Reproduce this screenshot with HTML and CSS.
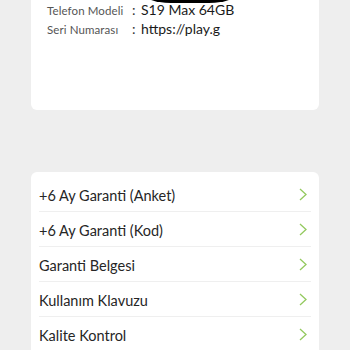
FILE: index.html
```html
<!DOCTYPE html>
<html>
<head>
<meta charset="utf-8">
<link rel="stylesheet" href="styles.css">
</head>
<body>
<div class="page">
  <div class="card info">
    <div class="blob"></div>
    <div class="inforow first">
      <span class="label">Telefon Modeli</span>
      <span class="colon">:</span>
      <span class="value">S19 Max 64GB</span>
    </div>
    <div class="inforow">
      <span class="label">Seri Numarası</span>
      <span class="colon">:</span>
      <span class="value">https://play.g</span>
    </div>
  </div>
  <div class="card menu">
    <div class="item"><span>+6 Ay Garanti (Anket)</span><svg class="chev" viewBox="0 0 8 13"><path d="M1 1 L7 6.5 L1 12" /></svg></div>
    <div class="item"><span>+6 Ay Garanti (Kod)</span><svg class="chev" viewBox="0 0 8 13"><path d="M1 1 L7 6.5 L1 12" /></svg></div>
    <div class="item"><span>Garanti Belgesi</span><svg class="chev" viewBox="0 0 8 13"><path d="M1 1 L7 6.5 L1 12" /></svg></div>
    <div class="item"><span>Kullanım Klavuzu</span><svg class="chev" viewBox="0 0 8 13"><path d="M1 1 L7 6.5 L1 12" /></svg></div>
    <div class="item last"><span>Kalite Kontrol</span><svg class="chev" viewBox="0 0 8 13"><path d="M1 1 L7 6.5 L1 12" /></svg></div>
  </div>
</div>
</body>
</html>
```
FILE: styles.css
```css
html, body {
  margin: 0;
  padding: 0;
  background: #eeeeee;
  font-family: "Lato", "Noto Sans", sans-serif;
  overflow: hidden;
}
.page {
  width: 350px;
  padding: 0 31px;
  box-sizing: border-box;
  margin-top: -20px;
}
.card {
  background: #ffffff;
  border-radius: 6px;
}
.info {
  height: 130px;
  position: relative;
  padding-top: 21px;
  box-sizing: border-box;
}
.blob {
  position: absolute;
  left: 110px;
  top: 0;
  width: 98px;
  height: 23px;
  background: #000;
  border-radius: 0 0 30px 30px / 0 0 12px 12px;
}
.inforow {
  display: flex;
  align-items: baseline;
  padding-left: 16px;
  height: 19px;
}
.label {
  width: 85px;
  font-size: 11.5px;
  color: #555;
  letter-spacing: 0.1px;
}
.colon {
  width: 9px;
  font-size: 14px;
  color: #333;
}
.value {
  font-size: 14px;
  color: #1a1a1a;
}
.menu {
  margin-top: 62px;
  padding: 5px 8px 20px;
}
.item {
  height: 35px;
  border-bottom: 1px solid #efefef;
  display: flex;
  align-items: center;
  justify-content: space-between;
  font-size: 14.5px;
  color: #262626;
  padding-top: 2px;
  box-sizing: border-box;
}
.item.last { border-bottom: none; }
.chev {
  width: 8px;
  height: 13px;
  margin-right: 4px;
  margin-top: -2px;
  fill: none;
  stroke: #93c95e;
  stroke-width: 1.3;
}
```
